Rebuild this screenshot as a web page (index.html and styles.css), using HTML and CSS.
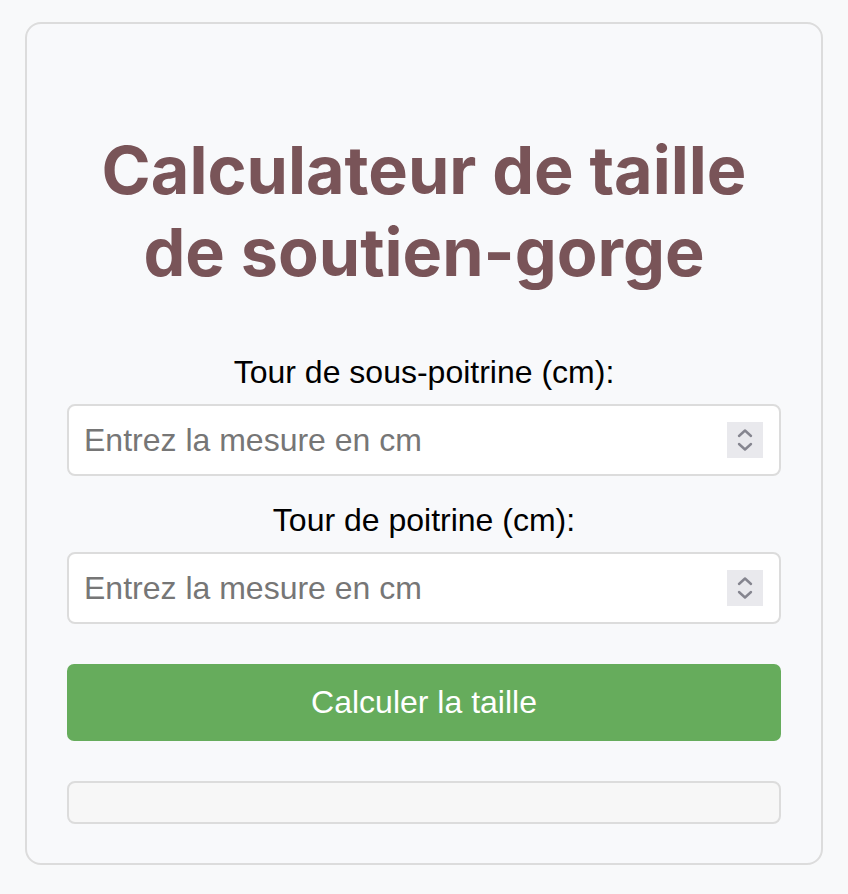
FILE: index.html
```html
<!DOCTYPE html>
<html lang="fr">
<head>
    <meta charset="UTF-8">
    <meta name="viewport" content="width=device-width, initial-scale=1.0">
    <title>Calculateur de taille de soutien-gorge</title>
    <link rel="stylesheet" href="styles.css">
</head>
<body>
    <div class="container">
        <h1>Calculateur de taille de soutien-gorge</h1>

        <div class="field">
            <label for="underbust">Tour de sous-poitrine (cm):</label>
            <div class="input-box">
                <input type="text" id="underbust" placeholder="Entrez la mesure en cm">
                <span class="spinner">
                    <svg width="36" height="36" viewBox="0 0 36 36">
                        <path d="M12 14 L18 8.5 L24 14" />
                        <path d="M12 22 L18 27.5 L24 22" />
                    </svg>
                </span>
            </div>
        </div>

        <div class="field">
            <label for="bust">Tour de poitrine (cm):</label>
            <div class="input-box">
                <input type="text" id="bust" placeholder="Entrez la mesure en cm">
                <span class="spinner">
                    <svg width="36" height="36" viewBox="0 0 36 36">
                        <path d="M12 14 L18 8.5 L24 14" />
                        <path d="M12 22 L18 27.5 L24 22" />
                    </svg>
                </span>
            </div>
        </div>

        <button class="calc-button">Calculer la taille</button>

        <div class="result"></div>
    </div>
</body>
</html>
```

FILE: styles.css
```css
body {
    font-family: "Liberation Sans", Arial, sans-serif;
    background-color: #f8f9fa;
    margin: 0;
    padding-top: 22px;
}

.container {
    width: 798px;
    box-sizing: border-box;
    margin: 0 auto;
    padding: 40px 40px 39px;
    background-color: #f8f9fb;
    border: 2px solid #dcdcdc;
    border-radius: 16px;
    display: flex;
    flex-direction: column;
}

h1 {
    font-family: Inter, "Liberation Sans", sans-serif;
    font-weight: 700;
    font-size: 66.5px;
    line-height: 82px;
    color: #795458;
    text-align: center;
    margin: 65px 0 63px;
}

.field {
    display: flex;
    flex-direction: column;
    margin-bottom: 28px;
}

.field label {
    font-size: 32px;
    line-height: 32px;
    text-align: center;
    color: #000;
    margin-bottom: 16px;
}

.input-box {
    display: flex;
    align-items: center;
    height: 72px;
    box-sizing: border-box;
    background-color: #fff;
    border: 2px solid #dcdcdc;
    border-radius: 8px;
    padding: 0 16px 0 15px;
}

.input-box input {
    flex: 1;
    border: none;
    outline: none;
    background: transparent;
    font-family: "Liberation Sans", Arial, sans-serif;
    font-size: 32px;
    color: #000;
    padding: 0;
}

.input-box input::placeholder {
    color: #767676;
}

.spinner {
    width: 36px;
    height: 36px;
    background-color: #e9e9ed;
    display: flex;
}

.spinner path {
    fill: none;
    stroke: #85858f;
    stroke-width: 2.4;
    stroke-linecap: round;
    stroke-linejoin: round;
}

.calc-button {
    margin-top: 12px;
    height: 77px;
    border: none;
    border-radius: 7px;
    background-color: #66ac5c;
    color: #fff;
    font-family: "Liberation Sans", Arial, sans-serif;
    font-size: 32px;
    cursor: pointer;
}

.result {
    margin-top: 40px;
    height: 43px;
    box-sizing: border-box;
    background-color: #f7f7f7;
    border: 2px solid #dcdcdc;
    border-radius: 8px;
}
```
